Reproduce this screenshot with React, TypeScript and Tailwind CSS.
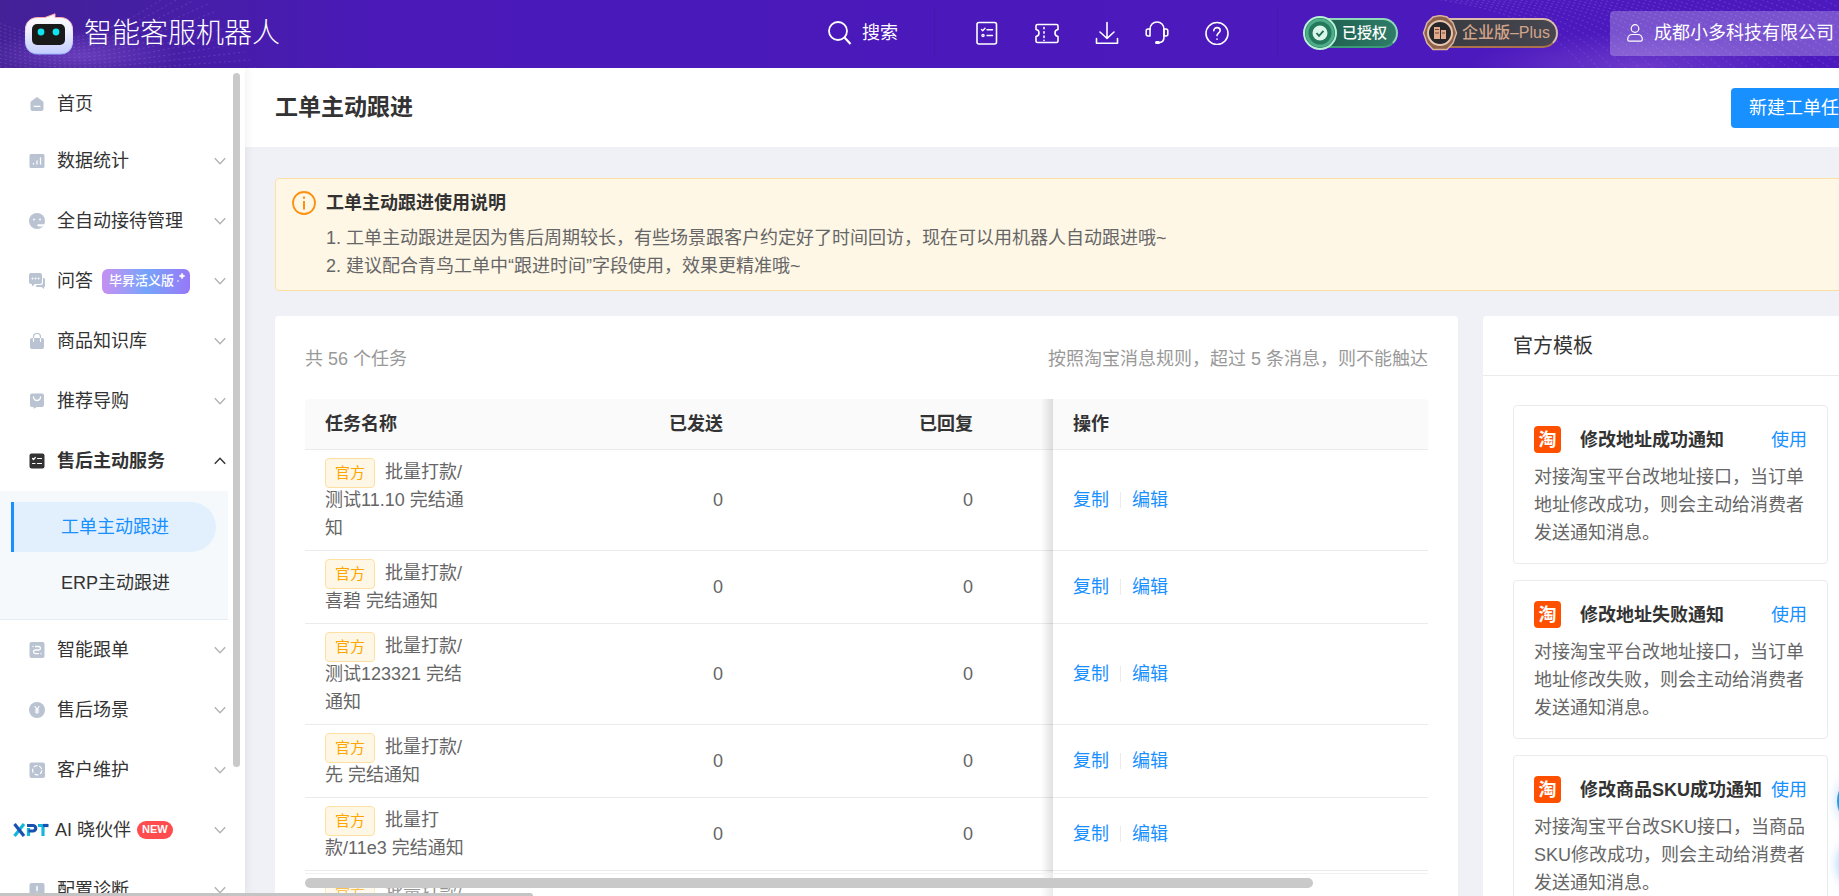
import type { ReactNode } from "react";

/* ---------- data ---------- */

type MenuEntry = {
  label: string;
  icon: ReactNode;
  badge?: "edition" | "new";
  open?: boolean;
  children?: string[];
};

const tasks = [
  "批量打款/测试11.10 完结通知",
  "批量打款/喜碧 完结通知",
  "批量打款/测试123321 完结通知",
  "批量打款/先 完结通知",
  "批量打款/11e3 完结通知",
  "批量打款/测试 完结通知",
];

const templates = [
  {
    title: "修改地址成功通知",
    text: "对接淘宝平台改地址接口，当订单地址修改成功，则会主动给消费者发送通知消息。",
  },
  {
    title: "修改地址失败通知",
    text: "对接淘宝平台改地址接口，当订单地址修改失败，则会主动给消费者发送通知消息。",
  },
  {
    title: "修改商品SKU成功通知",
    text: "对接淘宝平台改SKU接口，当商品SKU修改成功，则会主动给消费者发送通知消息。",
  },
];

/* ---------- sidebar icons (16x16) ---------- */

function MenuSvg({ children }: { children: ReactNode }) {
  return (
    <svg viewBox="0 0 16 16" className="h-4 w-4 shrink-0" fill="currentColor" aria-hidden="true">
      {children}
    </svg>
  );
}

const stroke = { fill: "none", stroke: "#fff", strokeLinecap: "round", strokeLinejoin: "round" } as const;

const menu: MenuEntry[] = [
  {
    label: "数据统计",
    icon: (
      <MenuSvg>
        <rect x="0.5" y="1" width="15" height="14" rx="1.5" />
        <path d="M4.5 10.5v0.5M8 8v3M11.5 5v6" {...stroke} strokeWidth="1.3" />
      </MenuSvg>
    ),
  },
  {
    label: "全自动接待管理",
    icon: (
      <MenuSvg>
        <circle cx="8" cy="8" r="8" />
        <circle cx="5" cy="6.5" r="1" fill="#fff" />
        <circle cx="11" cy="6.5" r="1" fill="#fff" />
        <path d="M16 10.800c-1.500.8-3.500.5-6 .5-2.400 0-2.400 2.200 0 2.200h3.500z" fill="#fff" />
      </MenuSvg>
    ),
  },
  {
    label: "问答",
    badge: "edition",
    icon: (
      <MenuSvg>
        <path d="M2 0h9a2 2 0 0 1 2 2v7a2 2 0 0 1-2 2H6l-3 2.500V11H2a2 2 0 0 1-2-2V2a2 2 0 0 1 2-2z" />
        <path d="M14 5h0.500A1.500 1.500 0 0 1 16 6.500V13a1 1 0 0 1-1 1v2l-2.500-2H8.500A1.500 1.500 0 0 1 7 12h5a2 2 0 0 0 2-2z" />
        <path d="M3.500 5.500h.1M6.500 5.500h.1M9.500 5.500h.1" {...stroke} strokeWidth="1.800" />
      </MenuSvg>
    ),
  },
  {
    label: "商品知识库",
    icon: (
      <MenuSvg>
        <path d="M1 7a2 2 0 0 1 2-2h10a2 2 0 0 1 2 2v7a2 2 0 0 1-2 2H3a2 2 0 0 1-2-2z" />
        <path d="M4.500 6V4a3.500 3.500 0 0 1 7 0v2" fill="none" stroke="currentColor" strokeWidth="1.200" />
        <path d="M4.500 5.500v3M11.500 5.500v3" {...stroke} strokeWidth="1.200" />
      </MenuSvg>
    ),
  },
  {
    label: "推荐导购",
    icon: (
      <MenuSvg>
        <path d="M3 .5h10a2 2 0 0 1 2 2V12a2 2 0 0 1-2 2H8l-3.500 1.800V14H3a2 2 0 0 1-2-2V2.500a2 2 0 0 1 2-2z" />
        <path d="M4.500 4a3.500 3.500 0 0 0 7 0" {...stroke} strokeWidth="1.400" />
      </MenuSvg>
    ),
  },
  {
    label: "售后主动服务",
    open: true,
    children: ["工单主动跟进", "ERP主动跟进"],
    icon: (
      <MenuSvg>
        <rect x="0.5" y="0.500" width="15" height="15" rx="2" />
        <path d="M3.500 5.500l1 1 1.800-2M3.500 10.500h2.500M8.500 5.500h4M8.500 10.500h4" {...stroke} strokeWidth="1.200" />
      </MenuSvg>
    ),
  },
  {
    label: "智能跟单",
    icon: (
      <MenuSvg>
        <rect x="0.5" y="0" width="15" height="16" rx="2" />
        <path d="M4 4.500h.1M6.500 4.500h3.200a1.700 1.700 0 0 1 0 3.500H6.300a1.800 1.800 0 0 0 0 3.600h3.200M11.900 11.600h.1" {...stroke} strokeWidth="1.300" />
      </MenuSvg>
    ),
  },
  {
    label: "售后场景",
    icon: (
      <MenuSvg>
        <circle cx="8" cy="8" r="8" />
        <path d="M6 4.500l2 3 2-3M8 7.500v4M6.200 8h3.600M6.200 10h3.600" {...stroke} strokeWidth="1.200" />
      </MenuSvg>
    ),
  },
  {
    label: "客户维护",
    icon: (
      <MenuSvg>
        <rect x="0.500" y="0.500" width="15.500" height="15.500" rx="2" />
        <circle cx="8.200" cy="8.200" r="4.600" fill="none" stroke="#fff" strokeWidth="1.200" strokeDasharray="4 1.780" />
      </MenuSvg>
    ),
  },
  {
    label: "AI 晓伙伴",
    badge: "new",
    icon: (
      <svg viewBox="0 0 36 14" className="h-[14px] w-9 shrink-0" fill="none" strokeWidth="3.200" aria-hidden="true">
        <path d="M11 1L1.500 13" stroke="#12b8dc" />
        <path d="M1.500 1L11 13" stroke="#1a50b0" />
        <path d="M15.500 13V5" stroke="#12b8dc" />
        <path d="M14 2.500h6a2.600 2.600 0 0 1 0 5.500h-4.500" stroke="#1a50b0" />
        <path d="M25 2.500h6M30 2v11" stroke="#12b8dc" />
        <path d="M30 2.500h5.500" stroke="#1a50b0" />
      </svg>
    ),
  },
  {
    label: "配置诊断",
    icon: (
      <MenuSvg>
        <rect x="0.500" y="1" width="15" height="14.500" rx="2" />
        <path d="M8 4.500v4M8 11.200v.1" {...stroke} strokeWidth="1.500" />
      </MenuSvg>
    ),
  },
];

function Chevron({ up = false }: { up?: boolean }) {
  return (
    <svg viewBox="0 0 12 8" className="h-2 w-3 shrink-0" fill="none" strokeWidth="1.400" aria-hidden="true">
      {up ? (
        <path d="M0.800 6.800L6 1.300l5.200 5.500" stroke="#333" />
      ) : (
        <path d="M0.800 1.200L6 6.700l5.200-5.500" stroke="#b3b3b3" />
      )}
    </svg>
  );
}

/* ---------- header ---------- */

// Dotted wave lines on both ends of the header
function HeaderPattern() {
  const left = Array.from({ length: 30 }, (_, i) => i);
  const right = Array.from({ length: 34 }, (_, i) => i);
  return (
    <svg className="pointer-events-none absolute inset-0 h-full w-full" viewBox="0 0 1905 68" preserveAspectRatio="xMidYMid slice" aria-hidden="true">
      <defs>
        <radialGradient id="glow">
          <stop offset="0" stopColor="#8d5ad8" stopOpacity="0.5" />
          <stop offset="1" stopColor="#8d5ad8" stopOpacity="0" />
        </radialGradient>
      </defs>
      <ellipse cx="80" cy="56" rx="100" ry="26" fill="url(#glow)" />
      <ellipse cx="1640" cy="66" rx="170" ry="34" fill="url(#glow)" />
      <g fill="none" stroke="#a98be6" strokeOpacity="0.26" strokeDasharray="2 3">
        {left.map((i) => (
          <path key={i} d={`M-10 ${20 + i * 4}C60 ${46 + i * 3} 90 ${52 + i * 2} ${190 + i * 6} ${-20 + i * 8}`} />
        ))}
      </g>
      <g fill="none" stroke="#a98be6" strokeOpacity="0.3" strokeDasharray="2 3">
        {right.map((i) => (
          <path key={i} d={`M${1380 + i * 16} -6C${1500 + i * 14} ${i} ${1560 + i * 12} 30 ${1590 + i * 14} 76`} />
        ))}
      </g>
    </svg>
  );
}

function Logo() {
  return (
    <svg viewBox="0 0 48 42" className="h-[42px] w-12 shrink-0" aria-hidden="true">
      <defs>
        <linearGradient id="face" x1="0" y1="0" x2="0" y2="1">
          <stop offset="0" stopColor="#ffffff" />
          <stop offset="0.400" stopColor="#f0f0fd" />
          <stop offset="1" stopColor="#c3ccff" />
        </linearGradient>
        <linearGradient id="edge" x1="0" y1="0" x2="0" y2="1">
          <stop offset="0" stopColor="#ff9d9d" />
          <stop offset="0.500" stopColor="#f0e6fa" />
          <stop offset="1" stopColor="#9db4ff" />
        </linearGradient>
      </defs>
      <path
        d="M13 4.500h7L30 .8v3.700h5c8 0 12.500 5 12.500 12v12c0 8-5 12.500-12.500 12.500H13C5 41 .5 36 .5 28.500v-12c0-7.500 5-12 12.500-12z"
        fill="url(#face)"
        stroke="url(#edge)"
      />
      <rect x="7" y="11" width="33" height="21" rx="5" fill="#1a1a1a" />
      <circle cx="16" cy="19" r="3.400" fill="#10e5ef" />
      <circle cx="31" cy="19" r="3.400" fill="#10e5ef" />
    </svg>
  );
}

function HeaderIcon({ label, children }: { label: string; children: ReactNode }) {
  return (
    <button type="button" aria-label={label} className="h-6 w-6 shrink-0">
      <svg viewBox="0 0 24 24" className="h-6 w-6" fill="none" stroke="#fff" strokeWidth="1.600" strokeLinecap="round" strokeLinejoin="round">
        {children}
      </svg>
    </button>
  );
}

function Header() {
  return (
    <header className="relative flex h-[68px] shrink-0 items-center overflow-hidden bg-linear-to-r from-[#432197] via-[#4a19b8] via-20% to-[#4c19bf] text-white">
      <HeaderPattern />
      <div className="relative flex flex-1 items-center pl-[25px]">
        <Logo />
        <span className="ml-[11px] text-[28px] leading-10 font-light">智能客服机器人</span>
      </div>

      <div className="relative flex items-center pb-0.5">
        <button type="button" className="flex items-center gap-2.5 pr-9 text-lg">
          <svg viewBox="0 0 24 24" className="h-6 w-6" fill="none" stroke="#fff" strokeWidth="1.800" aria-hidden="true">
            <circle cx="10" cy="10" r="9" />
            <path d="M16.500 16.500L22.500 23" strokeWidth="2.200" />
          </svg>
          搜索
        </button>
        <span className="h-[50px] w-px bg-[#4417ad]" />
        <div className="flex items-center gap-9 pl-10">
          <HeaderIcon label="任务">
            <rect x="2" y="1.500" width="19.500" height="21.500" rx="2" />
            <path d="M6.500 8.500l1.200 1.200L10 7.200M12 8.700h5.500M12 14.500h5.500" strokeWidth="1.400" />
            <circle cx="8" cy="14.500" r="1.100" strokeWidth="1.300" />
          </HeaderIcon>
          <HeaderIcon label="卡券">
            <path d="M2.500 3.500h19c1 0 1.500.6 1.500 1.500v3.500c-2 .3-3 1.700-3 3.500s1 3.200 3 3.500V20c0 .9-.5 1.500-1.500 1.500h-19C1.500 21.500 1 20.900 1 20v-4.500c2-.3 3-1.700 3-3.500S3 8.800 1 8.500V5c0-.9.500-1.500 1.500-1.500z" />
            <path d="M9 6.500v13" strokeDasharray="1.300 3" />
          </HeaderIcon>
          <HeaderIcon label="下载">
            <path d="M12 1.500v16M5 11l7 6.500 7-6.500M1.500 17.500v4.700h21v-4.700" />
          </HeaderIcon>
        </div>
        <div className="flex items-center gap-9 pr-10 pl-[26px]">
          <HeaderIcon label="客服">
            <path d="M5 8.500C5 4 8 1 12 1s7 3 7 7.500v7.500c0 3.500-2.200 5.700-5.500 5.700" />
            <path d="M5 8H3C1.800 8 1.200 8.800 1.200 10v3c0 1.200.6 2 1.800 2h2zM19 8h2c1.200 0 1.800.8 1.800 2v3c0 1.200-.6 2-1.800 2h-2z" />
            <path d="M11.500 21.500h2" strokeWidth="3" />
          </HeaderIcon>
          <HeaderIcon label="帮助">
            <circle cx="12" cy="12.500" r="11" />
            <path d="M8.800 9.800c0-1.900 1.300-3.200 3.200-3.200s3.200 1.200 3.200 2.900c0 2.200-3.200 2.500-3.200 5.100M12 18v.2" />
          </HeaderIcon>
        </div>
        <span className="ml-2 h-[50px] w-px bg-[#4417ad]" />
      </div>

      <div className="relative flex items-center pb-0.5">
        <a href="#auth" className="relative ml-7 flex h-[30px] w-[92px] items-center justify-end rounded-full border-2 border-[#8fd9ba] border-b-[#3b9b78] bg-linear-to-r from-[#1d5a4b] to-[#2e7c69] pr-[9px] text-[15px] font-medium">
          <svg viewBox="0 0 36 36" className="absolute -top-[5px] -left-1.5 h-9 w-9" aria-hidden="true">
            <circle cx="18" cy="18" r="16" fill="#207558" stroke="#b8f0d8" strokeWidth="2" />
            <circle cx="18" cy="18" r="13" fill="#24785c" stroke="#4fae8a" strokeWidth="3" />
            <circle cx="18" cy="18" r="7.500" fill="#dcf5ea" />
            <path d="M14.500 18l2.500 2.800 4.500-5" fill="none" stroke="#1d6b51" strokeWidth="1.800" />
          </svg>
          已授权
        </a>
        <a href="#plan" className="relative ml-8 flex h-[30px] w-[128px] items-center justify-end rounded-full border-2 border-[#dcbca8] border-b-[#a9734f] bg-linear-to-r from-[#3a3a40] to-[#464650] pr-1.5 text-base font-medium whitespace-nowrap text-[#d0a48a]">
          <svg viewBox="0 0 36 36" className="absolute -top-[5px] -left-2.5 h-9 w-9" aria-hidden="true">
            <path d="M11 2l7-1.500L25 2l6 6 3.500 10L31 28l-6 6.500H11L5 28 1.500 18 5 8z" fill="#8c6149" stroke="#d9b39c" strokeWidth="1.500" />
            <circle cx="18" cy="18" r="12" fill="#26262b" stroke="#e6c5b0" strokeWidth="2" />
            <path d="M12 12h6v12h-6zM19 15h5v9h-5z" fill="#e3a98c" />
            <path d="M13 14.500h4M20 18h3M13 18h4" stroke="#6e4836" />
          </svg>
          企业版–Plus
        </a>
        <button type="button" className="ml-[52px] flex h-[45px] w-[295px] items-center rounded-l bg-white/25 pl-[17px] text-lg whitespace-nowrap">
          <svg viewBox="0 0 16 18" className="mr-[11px] h-[18px] w-4" fill="none" stroke="#fff" strokeWidth="1.200" aria-hidden="true">
            <circle cx="8" cy="4.500" r="3.800" />
            <path d="M.7 15.500c0-3.400 2.300-5 4.800-5h5c2.500 0 4.800 1.600 4.800 5 0 1-.5 1.700-1.500 1.700H2.200c-1 0-1.500-.7-1.500-1.700z" />
          </svg>
          成都小多科技有限公司
        </button>
      </div>
    </header>
  );
}

/* ---------- sidebar ---------- */

function EditionBadge() {
  return (
    <span className="relative ml-[9px] flex h-[25px] items-center rounded-md bg-linear-to-r from-[#c58ff2] via-[#73a4fa] to-[#9678f8] pr-4 pl-[7px] text-[13px] font-medium text-white">
      毕昇活义版
      <svg viewBox="0 0 10 12" className="absolute top-1 right-1 h-3 w-2.5" fill="#fff" aria-hidden="true">
        <path d="M6 0l1 2 2 1-2 1-1 2-1-2-2-1 2-1z" stroke="#fff" strokeWidth="0.500" />
        <circle cx="2" cy="8" r="1" opacity="0.6" />
      </svg>
    </span>
  );
}

function Sidebar() {
  return (
    <aside className="relative w-[245px] shrink-0 overflow-hidden bg-white shadow-[2px_0_8px_rgba(0,0,0,0.06)]">
      <nav className="w-[228px] pt-[9px] text-lg text-[#333]">
        <a href="#home" className="flex h-[54px] items-center pl-[29px]">
          <span className="text-[#b9c3d1]">
            <MenuSvg>
              <path d="M8 1l5.500 4c.7.500 1 1 1 1.800V13a2 2 0 0 1-2 2h-9a2 2 0 0 1-2-2V6.800c0-.8.300-1.300 1-1.800z" />
              <path d="M5 10.300h6" {...stroke} strokeWidth="1.200" />
            </MenuSvg>
          </span>
          <span className="ml-3">首页</span>
        </a>

        {menu.map((entry) => (
          <div key={entry.label}>
            <button
              type="button"
              aria-expanded={entry.open ?? false}
              className={`flex h-[60px] w-full items-center pr-0.5 text-left ${entry.badge === "new" ? "pl-[13px]" : "pl-[29px]"} ${entry.open ? "font-bold" : ""}`}
            >
              <span className={entry.open ? "text-[#333]" : "text-[#b9c3d1]"}>{entry.icon}</span>
              <span className={entry.badge === "new" ? "ml-1.5" : "ml-3"}>{entry.label}</span>
              {entry.badge === "edition" && <EditionBadge />}
              {entry.badge === "new" && (
                <span className="ml-1.5 flex h-[18px] items-center rounded-full bg-[#ff4d4f] px-[5px] text-[11px] font-black text-white">NEW</span>
              )}
              <span className="ml-auto">
                <Chevron up={entry.open} />
              </span>
            </button>

            {entry.children && (
              <div className="flex flex-col gap-1.5 border-b border-[#e3edf6] bg-[#f5f9fc] py-[11px] pr-3 pl-[11px]">
                {entry.children.map((child, i) => (
                  <a
                    key={child}
                    href={`#sub-${i}`}
                    className={`flex h-[50px] items-center rounded-r-full border-l-3 pl-[47px] ${i === 0 ? "border-[#1890ff] bg-[#e2f0fe] text-[#1890ff]" : "border-transparent"}`}
                  >
                    {child}
                  </a>
                ))}
              </div>
            )}
          </div>
        ))}
      </nav>
      <span className="absolute top-[5px] right-[5px] h-[694px] w-[7px] rounded-full bg-[#c9c9c9]" />
    </aside>
  );
}

/* ---------- content ---------- */

function Notice() {
  return (
    <section className="flex rounded border border-[#ffe0a3] bg-[#fff7e6] px-4 py-2.5">
      <svg viewBox="0 0 24 24" className="mt-0.5 h-6 w-6 shrink-0" fill="none" stroke="#ff8f0f" strokeWidth="1.800" aria-hidden="true">
        <circle cx="12" cy="12" r="11" />
        <path d="M12 10v8.500M12 5.500v2.200" strokeWidth="2" />
      </svg>
      <div className="ml-2.5 text-lg leading-7">
        <h2 className="font-bold text-[#333]">工单主动跟进使用说明</h2>
        <div className="mt-[7px] text-[#666]">
          <p>1. 工单主动跟进是因为售后周期较长，有些场景跟客户约定好了时间回访，现在可以用机器人自动跟进哦~</p>
          <p>2. 建议配合青鸟工单中“跟进时间”字段使用，效果更精准哦~</p>
        </div>
      </div>
    </section>
  );
}

// Fixed column casts a soft shadow over the columns on its left
const fixedCell =
  "relative after:pointer-events-none after:absolute after:top-0 after:right-full after:-bottom-px after:w-3 after:bg-linear-to-l after:from-black/12 after:to-transparent";

function TaskTable() {
  return (
    <section className="flex-1 rounded bg-white px-[30px] pt-[29px]">
      <div className="mb-[26px] flex justify-between text-lg leading-7 text-[#999]">
        <p>共 56 个任务</p>
        <p>按照淘宝消息规则，超过 5 条消息，则不能触达</p>
      </div>

      <table className="w-full table-fixed border-separate border-spacing-0 text-left text-lg leading-7 text-[#666]">
        <colgroup>
          <col className="w-[188px]" />
          <col className="w-[250px]" />
          <col className="w-[250px]" />
          <col />
          <col className="w-[375px]" />
        </colgroup>
        <thead className="text-[#333]">
          <tr className="h-[51px]">
            <th className="rounded-tl border-b border-[#ebebeb] bg-[#fafafa] px-5">任务名称</th>
            <th className="border-b border-[#ebebeb] bg-[#fafafa] px-5 text-right">已发送</th>
            <th className="border-b border-[#ebebeb] bg-[#fafafa] px-5 text-right">已回复</th>
            <td className="border-b border-[#ebebeb] bg-[#fafafa]" />
            <th className={`rounded-tr border-b border-[#ebebeb] bg-[#fafafa] px-5 ${fixedCell}`}>操作</th>
          </tr>
        </thead>
        <tbody>
          {tasks.map((task) => (
            <tr key={task}>
              <td className="border-b border-[#ebebeb] px-5 py-2">
                <span className="-my-1 mr-2.5 inline-flex h-[30px] w-[50px] items-center justify-center rounded border border-[#ffe0a3] bg-[#fff7e6] align-middle text-[15px] text-[#ffa500]">
                  官方
                </span>
                {task}
              </td>
              <td className="border-b border-[#ebebeb] px-5 text-right">0</td>
              <td className="border-b border-[#ebebeb] px-5 text-right">0</td>
              <td className="border-b border-[#ebebeb]" />
              <td className={`border-b border-[#ebebeb] px-5 ${fixedCell}`}>
                <div className="flex items-center gap-[11px] text-[#1890ff]">
                  <button type="button">复制</button>
                  <span className="h-4 w-px bg-[#ebebeb]" />
                  <button type="button">编辑</button>
                </div>
              </td>
            </tr>
          ))}
        </tbody>
      </table>
    </section>
  );
}

function TaobaoIcon() {
  return (
    <span className="flex h-[27px] w-[27px] shrink-0 items-center justify-center rounded bg-[#ff5000] text-lg leading-none font-bold text-white">
      淘
    </span>
  );
}

function Templates() {
  return (
    <section className="w-[392px] shrink-0 rounded bg-white">
      <h2 className="border-b border-[#ebebeb] px-[30px] pt-4 pb-[15px] text-xl leading-7 text-[#333]">官方模板</h2>
      <div className="flex flex-col gap-4 py-[29px] pr-[47px] pl-[30px]">
        {templates.map((item) => (
          <article key={item.title} className="rounded border border-[#ebebeb] px-5 pt-5 pb-4 text-lg leading-7">
            <div className="flex h-[27px] items-center">
              <TaobaoIcon />
              <h3 className="ml-[19px] font-bold whitespace-nowrap text-[#333]">{item.title}</h3>
              <button type="button" className="ml-auto shrink-0 text-[#1890ff]">
                使用
              </button>
            </div>
            <p className="mt-2.5 text-[#666]">{item.text}</p>
          </article>
        ))}
      </div>
    </section>
  );
}

export default function App() {
  return (
    <div className="relative h-screen overflow-hidden bg-[#f0f1f6] font-['Liberation_Sans','Noto_Sans_CJK_SC',sans-serif]">
      <div className="flex h-full min-w-[1905px] flex-col">
        <Header />
        <div className="flex min-h-0 flex-1">
          <Sidebar />
          <main className="flex-1 overflow-hidden">
            <div className="flex h-[79px] items-center justify-between bg-white px-[30px]">
              <h1 className="text-[23px] font-bold text-[#333]">工单主动跟进</h1>
              <button type="button" className="h-10 rounded bg-[#1890ff] px-[18px] text-lg text-white">
                新建工单任务
              </button>
            </div>
            <div className="flex flex-col gap-[25px] px-[30px] pt-[31px]">
              <Notice />
              <div className="flex gap-[25px]">
                <TaskTable />
                <Templates />
              </div>
            </div>
          </main>
        </div>
      </div>

      {/* Sticky horizontal scrollbar of the table */}
      <div className="absolute right-[411px] bottom-0 left-[305px] h-[23px] border-t border-[#f0f0f0] bg-white/30 pt-1">
        <div className="h-2.5 w-[1008px] rounded-full bg-[#c9c9c9]" />
      </div>
      <div className="absolute bottom-0 left-0 h-[3px] w-[533px] rounded-tr bg-[#c4c4c4]" />

      {/* Edge of the floating assistant */}
      <div className="absolute -right-14 bottom-[66px] h-[58px] w-[58px] rounded-full bg-[#0fa5f5] shadow-[0_0_12px_rgba(24,144,255,0.3)]" />
      <div className="absolute -right-14 bottom-1 h-14 w-14 rounded-full bg-white shadow-[0_0_12px_rgba(24,144,255,0.5)]" />
    </div>
  );
}
